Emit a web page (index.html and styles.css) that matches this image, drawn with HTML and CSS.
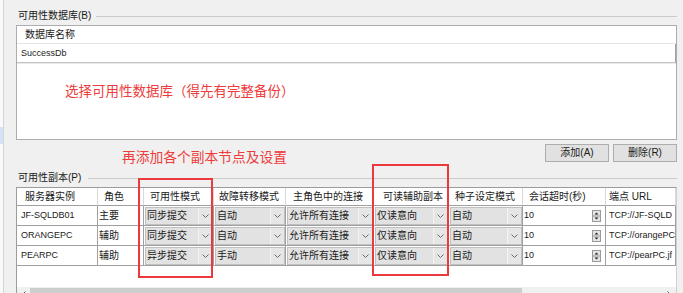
FILE: index.html
```html
<!DOCTYPE html>
<html lang="zh-CN">
<head>
    <meta charset="UTF-8">
    <meta name="viewport" content="width=device-width, initial-scale=1.0">
    <title>可用性组向导</title>
    <link rel="stylesheet" href="styles.css">
</head>
<body>
    <div class="edge"><div class="edge-mark"></div></div>

    <main class="content">
        <div class="group-title"><span>可用性数据库(B)</span></div>
        <div class="listbox">
            <div class="list-head">数据库名称</div>
            <div class="list-row latin">SuccessDb</div>
            <p class="hint hint-db">选择可用性数据库（得先有完整备份）</p>
        </div>

        <div class="toolbar">
            <p class="hint hint-replica">再添加各个副本节点及设置</p>
            <div class="buttons">
                <button class="btn">添加(A)</button>
                <button class="btn">删除(R)</button>
            </div>
        </div>

        <div class="group-title group-replica"><span>可用性副本(P)</span></div>
        <div class="grid-view">
            <div class="grid">
                <!-- header -->
                <div class="hcell pad-8">服务器实例</div>
                <div class="hcell pad-6">角色</div>
                <div class="hcell pad-6">可用性模式</div>
                <div class="hcell pad-5">故障转移模式</div>
                <div class="hcell pad-7">主角色中的连接</div>
                <div class="hcell pad-9">可读辅助副本</div>
                <div class="hcell pad-6">种子设定模式</div>
                <div class="hcell pad-6">会话超时(秒)</div>
                <div class="hcell pad-3">端点 URL</div>

                <!-- JF-SQLDB01 -->
                <div class="cell latin pad-4">JF-SQLDB01</div>
                <div class="cell pad-1">主要</div>
                <div class="cell combo-cell"><div class="combo"><span class="combo-text">同步提交</span><span class="combo-arrow"><svg width="7" height="4" viewBox="0 0 7 4"><polyline points="0.5,0.5 3.5,3.5 6.5,0.5" fill="none" stroke="#6a6a6a" stroke-width="1"/></svg></span></div></div>
                <div class="cell combo-cell"><div class="combo"><span class="combo-text">自动</span><span class="combo-arrow"><svg width="7" height="4" viewBox="0 0 7 4"><polyline points="0.5,0.5 3.5,3.5 6.5,0.5" fill="none" stroke="#6a6a6a" stroke-width="1"/></svg></span></div></div>
                <div class="cell combo-cell"><div class="combo"><span class="combo-text">允许所有连接</span><span class="combo-arrow"><svg width="7" height="4" viewBox="0 0 7 4"><polyline points="0.5,0.5 3.5,3.5 6.5,0.5" fill="none" stroke="#6a6a6a" stroke-width="1"/></svg></span></div></div>
                <div class="cell combo-cell"><div class="combo"><span class="combo-text">仅读意向</span><span class="combo-arrow"><svg width="7" height="4" viewBox="0 0 7 4"><polyline points="0.5,0.5 3.5,3.5 6.5,0.5" fill="none" stroke="#6a6a6a" stroke-width="1"/></svg></span></div></div>
                <div class="cell combo-cell"><div class="combo"><span class="combo-text">自动</span><span class="combo-arrow"><svg width="7" height="4" viewBox="0 0 7 4"><polyline points="0.5,0.5 3.5,3.5 6.5,0.5" fill="none" stroke="#6a6a6a" stroke-width="1"/></svg></span></div></div>
                <div class="cell spin-cell"><span class="latin">10</span><span class="spinner"><svg width="9" height="12" viewBox="0 0 9 12"><rect x="0.5" y="0.5" width="8" height="11" fill="#e6e6e6" stroke="#9a9a9a"/><line x1="1" y1="6" x2="8" y2="6" stroke="#9a9a9a"/><polygon points="2.5,4.5 6.5,4.5 4.5,2.5" fill="#222"/><polygon points="2.5,7.5 6.5,7.5 4.5,9.5" fill="#222"/></svg></span></div>
                <div class="cell latin pad-3">TCP://JF-SQLD</div>

                <!-- ORANGEPC -->
                <div class="cell latin pad-4">ORANGEPC</div>
                <div class="cell pad-1">辅助</div>
                <div class="cell combo-cell"><div class="combo"><span class="combo-text">同步提交</span><span class="combo-arrow"><svg width="7" height="4" viewBox="0 0 7 4"><polyline points="0.5,0.5 3.5,3.5 6.5,0.5" fill="none" stroke="#6a6a6a" stroke-width="1"/></svg></span></div></div>
                <div class="cell combo-cell"><div class="combo"><span class="combo-text">自动</span><span class="combo-arrow"><svg width="7" height="4" viewBox="0 0 7 4"><polyline points="0.5,0.5 3.5,3.5 6.5,0.5" fill="none" stroke="#6a6a6a" stroke-width="1"/></svg></span></div></div>
                <div class="cell combo-cell"><div class="combo"><span class="combo-text">允许所有连接</span><span class="combo-arrow"><svg width="7" height="4" viewBox="0 0 7 4"><polyline points="0.5,0.5 3.5,3.5 6.5,0.5" fill="none" stroke="#6a6a6a" stroke-width="1"/></svg></span></div></div>
                <div class="cell combo-cell"><div class="combo"><span class="combo-text">仅读意向</span><span class="combo-arrow"><svg width="7" height="4" viewBox="0 0 7 4"><polyline points="0.5,0.5 3.5,3.5 6.5,0.5" fill="none" stroke="#6a6a6a" stroke-width="1"/></svg></span></div></div>
                <div class="cell combo-cell"><div class="combo"><span class="combo-text">自动</span><span class="combo-arrow"><svg width="7" height="4" viewBox="0 0 7 4"><polyline points="0.5,0.5 3.5,3.5 6.5,0.5" fill="none" stroke="#6a6a6a" stroke-width="1"/></svg></span></div></div>
                <div class="cell spin-cell"><span class="latin">10</span><span class="spinner"><svg width="9" height="12" viewBox="0 0 9 12"><rect x="0.5" y="0.5" width="8" height="11" fill="#e6e6e6" stroke="#9a9a9a"/><line x1="1" y1="6" x2="8" y2="6" stroke="#9a9a9a"/><polygon points="2.5,4.5 6.5,4.5 4.5,2.5" fill="#222"/><polygon points="2.5,7.5 6.5,7.5 4.5,9.5" fill="#222"/></svg></span></div>
                <div class="cell latin pad-3">TCP://orangePC</div>

                <!-- PEARPC -->
                <div class="cell latin pad-4">PEARPC</div>
                <div class="cell pad-1">辅助</div>
                <div class="cell combo-cell"><div class="combo"><span class="combo-text">异步提交</span><span class="combo-arrow"><svg width="7" height="4" viewBox="0 0 7 4"><polyline points="0.5,0.5 3.5,3.5 6.5,0.5" fill="none" stroke="#6a6a6a" stroke-width="1"/></svg></span></div></div>
                <div class="cell combo-cell"><div class="combo"><span class="combo-text">手动</span><span class="combo-arrow"><svg width="7" height="4" viewBox="0 0 7 4"><polyline points="0.5,0.5 3.5,3.5 6.5,0.5" fill="none" stroke="#6a6a6a" stroke-width="1"/></svg></span></div></div>
                <div class="cell combo-cell"><div class="combo"><span class="combo-text">允许所有连接</span><span class="combo-arrow"><svg width="7" height="4" viewBox="0 0 7 4"><polyline points="0.5,0.5 3.5,3.5 6.5,0.5" fill="none" stroke="#6a6a6a" stroke-width="1"/></svg></span></div></div>
                <div class="cell combo-cell"><div class="combo"><span class="combo-text">仅读意向</span><span class="combo-arrow"><svg width="7" height="4" viewBox="0 0 7 4"><polyline points="0.5,0.5 3.5,3.5 6.5,0.5" fill="none" stroke="#6a6a6a" stroke-width="1"/></svg></span></div></div>
                <div class="cell combo-cell"><div class="combo"><span class="combo-text">自动</span><span class="combo-arrow"><svg width="7" height="4" viewBox="0 0 7 4"><polyline points="0.5,0.5 3.5,3.5 6.5,0.5" fill="none" stroke="#6a6a6a" stroke-width="1"/></svg></span></div></div>
                <div class="cell spin-cell"><span class="latin">10</span><span class="spinner"><svg width="9" height="12" viewBox="0 0 9 12"><rect x="0.5" y="0.5" width="8" height="11" fill="#e6e6e6" stroke="#9a9a9a"/><line x1="1" y1="6" x2="8" y2="6" stroke="#9a9a9a"/><polygon points="2.5,4.5 6.5,4.5 4.5,2.5" fill="#222"/><polygon points="2.5,7.5 6.5,7.5 4.5,9.5" fill="#222"/></svg></span></div>
                <div class="cell latin pad-3">TCP://pearPC.jf</div>
            </div>
            <div class="grid-empty"></div>
            <div class="hscroll">
                <span class="scroll-btn"><svg width="4" height="7" viewBox="0 0 4 7"><polyline points="3.5,0.5 0.5,3.5 3.5,6.5" fill="none" stroke="#606060"/></svg></span>
                <span class="scroll-thumb"></span>
                <span class="scroll-track"></span>
                <span class="scroll-btn"><svg width="4" height="7" viewBox="0 0 4 7"><polyline points="0.5,0.5 3.5,3.5 0.5,6.5" fill="none" stroke="#606060"/></svg></span>
            </div>
        </div>

        <!-- red annotation boxes -->
        <div class="mark mark-mode"></div>
        <div class="mark mark-readable"></div>
    </main>
</body>
</html>
```

FILE: styles.css
```css
body {
    margin: 0;
    width: 683px;
    height: 293px;
    overflow: hidden;
    display: flex;
    background-color: #f0f0f0;
    font-family: "Liberation Sans", "Noto Sans CJK SC", sans-serif;
    font-size: 10px;
    color: #1a1a1a;
}

.edge {
    flex-shrink: 0;
    width: 3px;
    border-right: 1px solid #d4d4d4;
    background-color: #f8f9fb;
}

.edge-mark {
    margin-top: 127px;
    height: 17px;
    background-color: #d3e4f6;
}

.content {
    flex: 1;
    min-width: 0;
    position: relative;
    padding: 0 6px 0 12px;
}

.latin {
    font-size: 9px;
}

/* group titles with etched line */
.group-title {
    display: flex;
    align-items: center;
    gap: 5px;
    height: 12px;
    line-height: 12px;
    margin-top: 10px;
    padding-left: 2px;
}

.group-title::after {
    content: "";
    flex: 1;
    border-top: 1px solid #cbcbcb;
}

.group-replica {
    margin-top: 5px;
}

.group-replica::after {
    margin-left: 2px;
}

/* database list */
.listbox {
    box-sizing: border-box;
    margin-top: 3px;
    height: 115px;
    border: 1px solid #adadad;
    background-color: #fff;
}

.list-head {
    box-sizing: border-box;
    height: 18px;
    line-height: 17px;
    padding-left: 8px;
    border-bottom: 1px solid #e5e5e5;
}

.list-row {
    box-sizing: border-box;
    height: 19px;
    line-height: 18px;
    padding-left: 4px;
    border-bottom: 1px solid #c4c4c4;
    border-right: 1px solid #a0a0a0;
    box-shadow: 0 1px 0 #e9e9e9;
}

.hint {
    margin: 0;
    color: #ee3b3b;
    line-height: 18px;
    white-space: nowrap;
}

.hint-db {
    margin-top: 20px;
    padding-left: 48px;
    font-size: 13.5px;
}

/* buttons row */
.toolbar {
    display: flex;
    justify-content: space-between;
    align-items: flex-start;
    margin-top: 4px;
}

.hint-replica {
    margin-top: 5px;
    margin-left: 106px;
    font-size: 13.75px;
}

.buttons {
    display: flex;
    gap: 4px;
}

.btn {
    box-sizing: border-box;
    width: 64px;
    height: 18px;
    padding: 0;
    font-family: inherit;
    font-size: 10px;
    line-height: 16px;
    color: #1a1a1a;
    background-color: #e1e1e1;
    border: 1px solid #adadad;
}

/* replica grid */
.grid-view {
    box-sizing: border-box;
    margin-top: 3px;
    height: 130px;
    border: 1px solid #9c9c9c;
    border-right-color: #d0d0d0;
    background-color: #fff;
    overflow: hidden;
}

.grid {
    display: grid;
    grid-template-columns: 81px 46px 70px 72px 88px 75px 74px 83px 70px;
}

.hcell,
.cell {
    box-sizing: border-box;
    white-space: nowrap;
    overflow: hidden;
    border-right: 1px solid #a0a0a0;
    border-bottom: 1px solid #a0a0a0;
}

.hcell {
    height: 18px;
    line-height: 17px;
    border-right-color: #d9d9d9;
}

.cell {
    height: 20px;
    line-height: 19px;
}

.pad-1 { padding-left: 1px; }
.pad-3 { padding-left: 3px; }
.pad-4 { padding-left: 4px; }
.pad-5 { padding-left: 5px; }
.pad-6 { padding-left: 6px; }
.pad-7 { padding-left: 7px; }
.pad-8 { padding-left: 8px; }
.pad-9 { padding-left: 9px; }

.combo-cell {
    padding: 1px 0 0 1px;
}

.combo {
    box-sizing: border-box;
    display: flex;
    height: 18px;
    border: 1px solid #c0c0c0;
    background-color: #e2e2e2;
}

.combo-text {
    flex: 1;
    padding-left: 1px;
    line-height: 16px;
    overflow: hidden;
}

.combo-arrow {
    width: 13px;
    display: flex;
    align-items: center;
    justify-content: center;
    border-left: 1px solid #f4f4f4;
    background-color: #e6e6e6;
}

.spin-cell {
    display: flex;
    justify-content: space-between;
    align-items: center;
    padding-left: 1px;
    padding-right: 4px;
}

.spinner {
    display: flex;
}

.grid-empty {
    height: 21px;
}

.hscroll {
    display: flex;
    height: 17px;
    background-color: #f0f0f0;
}

.scroll-btn {
    width: 13px;
    display: flex;
    justify-content: center;
    padding-top: 4px;
}

.scroll-btn:last-child {
    width: 15px;
}

.scroll-thumb {
    width: 492px;
    margin-top: 1px;
    background-color: #cdcdcd;
}

.scroll-track {
    flex: 1;
}

/* annotation boxes drawn over the grid */
.mark {
    position: absolute;
    box-sizing: border-box;
    border: 2px solid #ea3a3d;
}

.mark-mode {
    left: 134px;
    top: 178px;
    width: 75px;
    height: 100px;
}

.mark-readable {
    left: 368px;
    top: 164px;
    width: 77px;
    height: 112px;
}
```
